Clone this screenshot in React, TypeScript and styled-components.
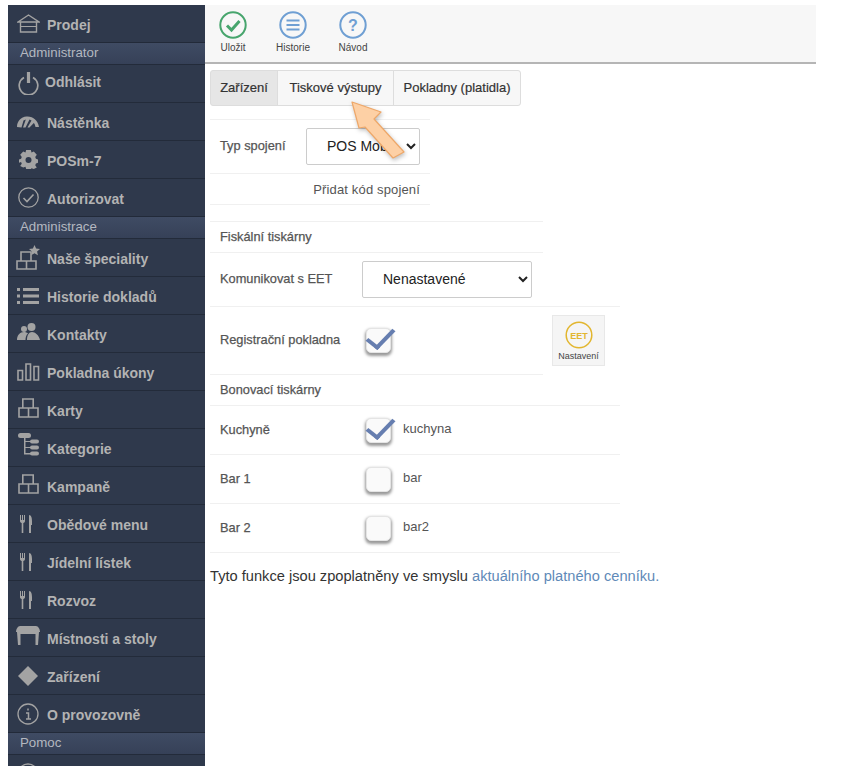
import React from 'react';
import styled, { createGlobalStyle } from 'styled-components';

const GlobalStyle = createGlobalStyle`
  html, body {
    margin: 0;
    padding: 0;
    background: #fff;
    font-family: "Liberation Sans", Arial, sans-serif;
  }
`;

const ICON = '#a3a3a3';

const HomeIcon = () => (
  <svg width="23" height="19" viewBox="0 0 23 19" fill="none" stroke={ICON} strokeWidth="1.4">
    <path d="M1 8 11.500 1 22 8z" />
    <path d="M3.500 8v10h16V8" />
    <path d="M3.500 12.500h16" strokeWidth="1" />
  </svg>
);

const PowerIcon = () => (
  <svg width="21" height="23" viewBox="0 0 21 23" fill="none" stroke={ICON} strokeWidth="1.700">
    <path d="M6 5.500a9.300 9.300 0 1 0 9 0" />
    <path d="M10.500 0v11" strokeWidth="3.200" />
  </svg>
);

const GaugeIcon = () => (
  <svg width="22" height="12" viewBox="0 0 22 12" fill={ICON}>
    <path d="M0 11C0 5 4 1 9.500.5 16 0 21 4.500 22 11h-3.500c-.3-1.500-.8-3-1.700-4L12.500 11.500h-2L14.500 4.500l-2-1L8.500 11.500H6L8.800 3.500 6.500 4.500 4.500 11.500z" />
  </svg>
);

const GearIcon = () => (
  <svg width="19" height="19" viewBox="0 0 24 24">
    <path
      fill={ICON}
      d="M9 0h6l.8 3.300 2.900-1.500 3.800 4.200-2 2.700.9 2.300 2.600.9v4.200l-2.600.9-.9 2.300 2 2.700-3.800 2-2.900-1.100L15 24H9l-.8-2.900-2.900 1.100-3.800-2 2-2.700-.9-2.300L0 16.100v-4.200l2.600-.9.900-2.300-2-2.700 3.800-4.200 2.900 1.500z"
    />
    <circle cx="12" cy="12.500" r="3.800" fill="#2f394c" />
  </svg>
);

const CheckCircleIcon = () => (
  <svg width="21" height="21" viewBox="0 0 21 21" fill="none" stroke={ICON} strokeWidth="1.300">
    <circle cx="10.500" cy="10.500" r="9.700" />
    <path d="m5.500 11 3.500 3.500 6.500-7" strokeWidth="1.600" />
  </svg>
);

const BoxesIcon = () => (
  <svg width="21" height="24" viewBox="0 0 21 24" fill="none" stroke={ICON} strokeWidth="1.600">
    <path d="M4.800 1h10.400v9H4.800zM1 10h9.500v9H1zM10.500 10H20v9h-9.500z" />
  </svg>
);

const StarBoxesIcon = () => (
  <svg width="24" height="25" viewBox="0 0 24 25" fill="none" stroke={ICON} strokeWidth="1.600">
    <path d="M5 7h10v9H5zM1 16h9.500v8H1zM10.500 16H20v8h-9.500z" />
    <path
      fill={ICON}
      stroke="none"
      d="m18.500 0 1.600 3.500 3.900.4-2.900 2.600.8 3.800-3.400-2-3.400 2 .8-3.800L13 3.900l3.900-.4z"
    />
  </svg>
);

const ListIcon = () => (
  <svg width="22" height="16" viewBox="0 0 22 16" fill={ICON}>
    <path d="M0 0h3v3H0zM6 0h16v3H6zM0 6.500h3v3H0zM6 6.500h16v3H6zM0 13h3v3H0zM6 13h16v3H6z" />
  </svg>
);

const PeopleIcon = () => (
  <svg width="23" height="21" viewBox="0 0 23 21" fill={ICON}>
    <circle cx="14.500" cy="4" r="4" />
    <circle cx="7" cy="6" r="3" />
    <path d="M0 17c0-5 3-8 7-8 1.500 0 3 .5 4 1.500C9 12 8.500 14.500 8.500 17zM10 17c0-5 2-8 5-8s7 3 8 8z" />
  </svg>
);

const BarsIcon = () => (
  <svg width="23" height="18" viewBox="0 0 23 18" fill="none" stroke={ICON} strokeWidth="1.600">
    <path d="M1 7.500h4.500V17H1zM9 1h4.500v16H9zM17 3.500h4.500V17H17z" />
  </svg>
);

const TreeIcon = () => (
  <svg width="22" height="29" viewBox="0 0 22 29" fill={ICON}>
    <rect x="1" y="0" width="13" height="5" rx="2.500" />
    <rect x="13" y="6.500" width="9" height="4" rx="2" />
    <rect x="13" y="12.500" width="9" height="4" rx="2" />
    <rect x="13" y="18.500" width="9" height="4" rx="2" />
    <path d="M7 5h1.500v15H14v1.500H7zM8 8h6v1H8zM8 14h6v1H8z" />
  </svg>
);

const CutleryIcon = () => (
  <svg width="17" height="18" viewBox="0 0 17 18" fill={ICON}>
    <path d="M0 0h1v5h1V0h1v5h1V0h1v6c0 1-.6 1.800-1.700 2.100V18H1.700V8.100C.6 7.800 0 7 0 6z" />
    <path d="M9 0c2.300 0 3 3 3 6v4h-1v8H9z" />
  </svg>
);

const TableIcon = () => (
  <svg width="24" height="23" viewBox="0 0 24 23" fill={ICON}>
    <path d="M4 0h16c2 0 4 3 4 6H0c0-3 2-6 4-6z" />
    <path d="M1 6h4.500v2H4.500v11H2zM18.500 6H23l-1 13h-2.500V8h-1zM5 6h14v2H5z" />
  </svg>
);

const DiamondIcon = () => (
  <svg width="20" height="20" viewBox="0 0 20 20" fill={ICON}>
    <path d="M10 0l10 10-10 10L0 10z" />
  </svg>
);

const InfoIcon = () => (
  <svg width="22" height="22" viewBox="0 0 22 22" fill="none" stroke={ICON} strokeWidth="1.300">
    <circle cx="11" cy="11" r="10" />
    <path d="M11 5.500v2M9 10h2.500v6M9 16h5" strokeWidth="1.500" />
  </svg>
);

const sections: { title?: string; items: { label?: string; icon: React.ReactNode; shift?: number; up?: boolean }[] }[] = [
  { items: [{ label: 'Prodej', icon: <HomeIcon /> }] },
  {
    title: 'Administrator',
    items: [
      { label: 'Odhlásit', icon: <PowerIcon />, shift: -2, up: true },
      { label: 'Nástěnka', icon: <GaugeIcon /> },
      { label: 'POSm-7', icon: <GearIcon /> },
      { label: 'Autorizovat', icon: <CheckCircleIcon /> },
    ],
  },
  {
    title: 'Administrace',
    items: [
      { label: 'Naše špeciality', icon: <StarBoxesIcon /> },
      { label: 'Historie dokladů', icon: <ListIcon /> },
      { label: 'Kontakty', icon: <PeopleIcon /> },
      { label: 'Pokladna úkony', icon: <BarsIcon /> },
      { label: 'Karty', icon: <BoxesIcon /> },
      { label: 'Kategorie', icon: <TreeIcon /> },
      { label: 'Kampaně', icon: <BoxesIcon /> },
      { label: 'Obědové menu', icon: <CutleryIcon /> },
      { label: 'Jídelní lístek', icon: <CutleryIcon /> },
      { label: 'Rozvoz', icon: <CutleryIcon /> },
      { label: 'Místnosti a stoly', icon: <TableIcon /> },
      { label: 'Zařízení', icon: <DiamondIcon /> },
      { label: 'O provozovně', icon: <InfoIcon /> },
    ],
  },
  { title: 'Pomoc', items: [{ icon: <InfoIcon /> }] },
];

function App() {
  return (
    <Page>
      <GlobalStyle />
      <Sidebar>
        {sections.map((section, i) => (
          <React.Fragment key={i}>
            {section.title && <SectionTitle>{section.title}</SectionTitle>}
            {section.items.map((item, j) => (
              <MenuItem key={j}>
                <MenuIcon>{item.icon}</MenuIcon>
                {item.label && (
                  <MenuLabel $shift={item.shift} $up={item.up}>
                    {item.label}
                  </MenuLabel>
                )}
              </MenuItem>
            ))}
          </React.Fragment>
        ))}
      </Sidebar>
      <Main>
        <Toolbar>
          <ToolButton>
            <svg width="28" height="28" viewBox="0 0 28 28" fill="none">
              <circle cx="14" cy="14" r="12.700" stroke="#47a56d" strokeWidth="2" />
              <path d="m8 14.500 4.500 4.500 8-9" stroke="#47a56d" strokeWidth="3" />
            </svg>
            <ToolLabel>Uložit</ToolLabel>
          </ToolButton>
          <ToolButton>
            <svg width="28" height="28" viewBox="0 0 28 28" fill="none">
              <circle cx="14" cy="14" r="12.700" stroke="#6f9fd3" strokeWidth="2" />
              <path d="M7.500 9.500h13M7.500 14h13M7.500 18.500h13" stroke="#6f9fd3" strokeWidth="2.200" />
            </svg>
            <ToolLabel>Historie</ToolLabel>
          </ToolButton>
          <ToolButton>
            <svg width="28" height="28" viewBox="0 0 28 28" fill="none">
              <circle cx="14" cy="14" r="12.700" stroke="#6f9fd3" strokeWidth="2" />
              <text x="14" y="20" textAnchor="middle" fontFamily="Liberation Sans, sans-serif" fontWeight="700" fontSize="16" fill="#6f9fd3">?</text>
            </svg>
            <ToolLabel>Návod</ToolLabel>
          </ToolButton>
        </Toolbar>

        <Content>
          <Tabs>
            <Tab $width={68} $active>Zařízení</Tab>
            <Tab $width={117}>Tiskové výstupy</Tab>
            <Tab $width={128}>Pokladny (platidla)</Tab>
          </Tabs>

          <Row $width={220} $height={54}>
            <RowLabel $width={86}>Typ spojení</RowLabel>
            <Select $width={114} defaultValue="pos">
              <option value="pos">POS Mobile</option>
            </Select>
          </Row>
          <Row $width={220} $height={32} $closed>
            <AddCode>Přidat kód spojení</AddCode>
          </Row>

          <Row $width={333} $height={31} $gap={16}>
            <RowLabel>Fiskální tiskárny</RowLabel>
          </Row>
          <Row $width={333} $height={54}>
            <RowLabel $width={142}>Komunikovat s EET</RowLabel>
            <Select $width={170} defaultValue="none">
              <option value="none">Nenastavené</option>
            </Select>
          </Row>
          <Row $width={410} $height={68}>
            <RowLabel $width={146}>Registrační pokladna</RowLabel>
            <Checkbox $checked />
            <SettingsButton>
              <svg width="28" height="28" viewBox="0 0 28 28" fill="none">
                <circle cx="14" cy="14" r="12.800" stroke="#e2b62f" strokeWidth="1.500" />
                <text x="14" y="17.500" textAnchor="middle" fontFamily="Liberation Sans, sans-serif" fontWeight="700" fontSize="9" fill="#e2b62f">EET</text>
              </svg>
              <span>Nastavení</span>
            </SettingsButton>
          </Row>
          <Row $width={333} $height={31}>
            <RowLabel>Bonovací tiskárny</RowLabel>
          </Row>
          <Row $width={410} $height={49}>
            <RowLabel $width={146}>Kuchyně</RowLabel>
            <Checkbox $checked />
            <PrinterName>kuchyna</PrinterName>
          </Row>
          <Row $width={410} $height={49}>
            <RowLabel $width={146}>Bar 1</RowLabel>
            <Checkbox />
            <PrinterName>bar</PrinterName>
          </Row>
          <Row $width={410} $height={50} $closed>
            <RowLabel $width={146}>Bar 2</RowLabel>
            <Checkbox />
            <PrinterName>bar2</PrinterName>
          </Row>

          <Note>
            Tyto funkce jsou zpoplatněny ve smyslu <NoteLink href="#">aktuálního platného cenníku.</NoteLink>
          </Note>

          <Arrow width="58" height="62" viewBox="0 0 58 62">
            <path
              d="M1 1 30 11 23 18 53 51 42 57 14 26 8 27z"
              fill="#fdd0a5"
              stroke="#eea768"
              strokeWidth="1.200"
              strokeLinejoin="round"
            />
          </Arrow>
        </Content>
      </Main>
    </Page>
  );
}

export default App;

const Page = styled.div`
  display: flex;
  align-items: flex-start;
  width: 866px;
  height: 766px;
  padding: 5px 0 0 8px;
  box-sizing: border-box;
  overflow: hidden;
`;

const Sidebar = styled.nav`
  flex: none;
  width: 197px;
  height: 761px;
  overflow: hidden;
  background: #2f394c;
`;

const SectionTitle = styled.div`
  height: 21px;
  padding-left: 12px;
  line-height: 19px;
  font-size: 13.3px;
  color: #b4b8c0;
  background: linear-gradient(#3f4b63, #364158);
  border-top: 1px solid #222a39;
`;

const MenuItem = styled.div`
  display: flex;
  align-items: center;
  height: 37px;
  border-top: 1px solid #232b3a;
  &:first-child {
    border-top: 0;
  }
`;

const MenuIcon = styled.span`
  flex: none;
  display: flex;
  align-items: center;
  justify-content: center;
  width: 26px;
  margin-left: 7px;
`;

const MenuLabel = styled.span<{ $shift?: number; $up?: boolean }>`
  margin-left: ${p => 6 + (p.$shift ?? 0)}px;
  margin-top: ${p => (p.$up ? 0 : 2)}px;
  margin-bottom: ${p => (p.$up ? 4 : 0)}px;
  font-size: 14px;
  font-weight: 700;
  color: #b3b3b3;
  white-space: nowrap;
`;

const Main = styled.main`
  flex: none;
  width: 611px;
`;

const Toolbar = styled.div`
  display: flex;
  gap: 4px;
  box-sizing: border-box;
  height: 59px;
  background: #f7f7f7;
  border-bottom: 2px solid #b5b5b5;
`;

const ToolButton = styled.div`
  display: flex;
  flex-direction: column;
  align-items: center;
  width: 56px;
  padding-top: 6px;
`;

const ToolLabel = styled.span`
  margin-top: 3px;
  font-size: 10px;
  color: #444;
`;

const Content = styled.div`
  position: relative;
  padding: 6px 0 0 5px;
  font-size: 13px;
  color: #555;
`;

const Tabs = styled.div`
  display: flex;
  height: 36px;
  margin-bottom: 13px;
`;

const Tab = styled.div<{ $width: number; $active?: boolean }>`
  display: flex;
  align-items: center;
  justify-content: center;
  box-sizing: border-box;
  width: ${p => p.$width}px;
  padding-bottom: 2px;
  border: 1px solid #ddd;
  margin-left: -1px;
  font-size: 13px;
  color: #333;
  -webkit-text-stroke: 0.2px #333;
  background: ${p => (p.$active ? '#e6e6e6' : '#f7f7f7')};
  &:first-child {
    margin-left: 0;
    border-radius: 3px 0 0 3px;
  }
  &:last-child {
    border-radius: 0 3px 3px 0;
  }
`;

const Row = styled.div<{ $width: number; $height: number; $gap?: number; $closed?: boolean }>`
  display: flex;
  align-items: center;
  box-sizing: border-box;
  width: ${p => p.$width}px;
  height: ${p => p.$height}px;
  margin-top: ${p => p.$gap ?? 0}px;
  padding-left: 10px;
  border-top: 1px solid #f0f0f0;
  border-bottom: ${p => (p.$closed ? '1px solid #f0f0f0' : '0')};
`;

const RowLabel = styled.span<{ $width?: number }>`
  flex: none;
  width: ${p => (p.$width ? `${p.$width}px` : 'auto')};
  margin-bottom: 2px;
  font-size: 12.8px;
  color: #555;
  -webkit-text-stroke: 0.25px #555;
  white-space: nowrap;
`;

const Select = styled.select<{ $width: number }>`
  width: ${p => p.$width}px;
  height: 37px;
  padding: 0 8px 2px 16px;
  font-family: inherit;
  font-size: 14px;
  color: #222;
  background: #fff;
  border: 1px solid #ccc;
  border-radius: 2px;
`;

const AddCode = styled.span`
  margin-left: auto;
  padding-right: 10px;
  font-size: 13px;
  letter-spacing: 0.15px;
  color: #555;
`;

const Checkbox = styled.span<{ $checked?: boolean }>`
  position: relative;
  flex: none;
  width: 23px;
  height: 23px;
  background: #fafafa;
  border: 1px solid #e4e4e4;
  border-radius: 5px;
  box-shadow: 0 2px 3px 1px #999;
  ${p =>
    p.$checked &&
    `
    &::after {
      content: '';
      position: absolute;
      left: 6px;
      top: -6px;
      width: 11px;
      height: 22px;
      border-right: 4px solid #667eb0;
      border-bottom: 4px solid #667eb0;
      transform: rotate(38deg) skewX(-6deg);
    }
  `}
`;

const SettingsButton = styled.div`
  display: flex;
  flex-direction: column;
  align-items: center;
  box-sizing: border-box;
  width: 53px;
  height: 51px;
  margin-left: 161px;
  padding-top: 5px;
  background: #f5f5f5;
  border: 1px solid #e8e8e8;
  font-size: 9px;
  color: #444;
  span {
    margin-top: 2px;
  }
`;

const PrinterName = styled.span`
  margin-left: 12px;
  margin-bottom: 3px;
  font-size: 13px;
  color: #555;
`;

const Note = styled.p`
  margin: 15px 0 0;
  font-size: 14.65px;
  color: #333;
`;

const NoteLink = styled.a`
  color: #5f8ab8;
  text-decoration: none;
`;

const Arrow = styled.svg`
  position: absolute;
  left: 146px;
  top: 37px;
  filter: drop-shadow(1px 2px 2px rgba(0, 0, 0, 0.25));
`;
